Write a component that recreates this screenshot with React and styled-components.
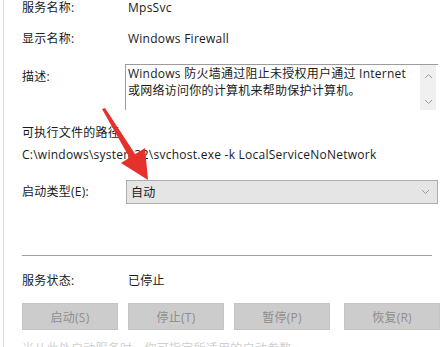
import styled, { createGlobalStyle } from 'styled-components';

const GlobalStyle = createGlobalStyle`
  html, body {
    margin: 0;
    padding: 0;
    background: #ffffff;
    overflow: hidden;
  }
  body {
    font-family: "Open Sans", "Noto Sans CJK SC", sans-serif;
    font-size: 12px;
    letter-spacing: 0.25px;
    color: #1a1a1a;
  }
`;

const buttons = ['启动(S)', '停止(T)', '暂停(P)', '恢复(R)'];

const App = () => {
  return (
    <>
      <GlobalStyle />
      <Window>
        <Content>
          <InfoRow top={0} height={16}>
            <Label>服务名称:</Label>
            <Value>MpsSvc</Value>
          </InfoRow>
          <InfoRow top={15} height={16}>
            <Label>显示名称:</Label>
            <Value>Windows Firewall</Value>
          </InfoRow>
          <DescRow>
            <Label pad={5}>描述:</Label>
            <TextBox>
              <TextBody>
                <div>Windows 防火墙通过阻止未授权用户通过 Internet</div>
                <div>或网络访问你的计算机来帮助保护计算机。</div>
              </TextBody>
              <ScrollBar>
                <Chevron up />
                <Chevron />
              </ScrollBar>
            </TextBox>
          </DescRow>
          <PlainLine top={15}>可执行文件的路径</PlainLine>
          <PlainLine top={6}>C:\windows\system32\svchost.exe -k LocalServiceNoNetwork</PlainLine>
          <SelectRow>
            <Label>启动类型(E):</Label>
            <Select>
              <span>自动</span>
              <Chevron />
            </Select>
          </SelectRow>
          <Divider />
          <InfoRow top={17} height={16}>
            <Label>服务状态:</Label>
            <Value>已停止</Value>
          </InfoRow>
          <ButtonRow>
            {buttons.map(b => (
              <ActionButton key={b}>{b}</ActionButton>
            ))}
          </ButtonRow>
          <Footer>当从此处启动服务时，你可指定所适用的启动参数。</Footer>
        </Content>
        <Arrow viewBox="0 0 442 347" width="442" height="347">
          <polygon
            fill="#e5312b"
            points="102,109 105,108 139,160 133,164"
          />
          <polygon fill="#e5312b" points="148,180 121,163 145,148" />
        </Arrow>
      </Window>
    </>
  );
};

const Chevron = ({ up }) => (
  <svg width="9" height="6" viewBox="0 0 9 6">
    <polyline
      points={up ? '1,5 4.5,1.5 8,5' : '1,1 4.5,4.5 8,1'}
      fill="none"
      stroke="#9a9a9a"
      strokeWidth="1"
    />
  </svg>
);

const Window = styled.div`
  position: relative;
  height: 347px;
  margin-left: 3px;
  border-left: 1px solid #dcdcdc;
  overflow: hidden;
`;

const Content = styled.div`
  display: flex;
  flex-direction: column;
  padding-left: 18px;
`;

const InfoRow = styled.div`
  display: flex;
  align-items: center;
  height: ${({ height }) => height}px;
  margin-top: ${({ top }) => top}px;
  line-height: 16px;
`;

const Label = styled.div`
  width: 106px;
  flex-shrink: 0;
  line-height: 16px;
  padding-top: ${({ pad }) => pad || 0}px;
  white-space: nowrap;
`;

const Value = styled.div`
  white-space: nowrap;
`;

const DescRow = styled.div`
  display: flex;
  align-items: flex-start;
  margin-top: 17px;
  height: 46px;
`;

const TextBox = styled.div`
  display: flex;
  margin-left: -3px;
  width: 313px;
  height: 46px;
  box-sizing: border-box;
  border-top: 1px solid #9c9c9c;
  border-left: 1px solid #9c9c9c;
`;

const TextBody = styled.div`
  flex: 1;
  padding: 0 4px 0 2px;
  line-height: 17px;
  white-space: nowrap;
`;

const ScrollBar = styled.div`
  width: 16px;
  display: flex;
  flex-direction: column;
  justify-content: space-between;
  align-items: center;
  padding: 8px 0 5px;
  background: #f0f0f0;
  margin-right: 2px;
`;

const PlainLine = styled.div`
  margin-top: ${({ top }) => top}px;
  line-height: 16px;
  white-space: nowrap;
`;

const SelectRow = styled.div`
  display: flex;
  align-items: center;
  margin-top: 17px;
  height: 24px;
`;

const Select = styled.div`
  display: flex;
  align-items: center;
  justify-content: space-between;
  margin-left: -2px;
  width: 312px;
  height: 24px;
  box-sizing: border-box;
  padding: 0 7px 0 4px;
  background: #e5e5e5;
  border: 1px solid #adadad;
`;

const Divider = styled.div`
  margin-top: 51px;
  width: 410px;
  height: 1px;
  background: #a0a0a0;
`;

const ButtonRow = styled.div`
  display: flex;
  margin-top: 14px;
  gap: 10px;
`;

const ActionButton = styled.div`
  width: 96px;
  height: 27px;
  box-sizing: border-box;
  display: flex;
  align-items: center;
  justify-content: center;
  background: #cccccc;
  border: 1px solid #c4c4c4;
  color: #8e8e8e;
  &:nth-child(4) {
    margin-left: 4px;
  }
`;

const Footer = styled.div`
  margin-top: 11px;
  line-height: 16px;
  color: #d0d0d0;
  white-space: nowrap;
`;

const Arrow = styled.svg`
  position: absolute;
  left: -4px;
  top: 0;
  pointer-events: none;
`;

export default App;
